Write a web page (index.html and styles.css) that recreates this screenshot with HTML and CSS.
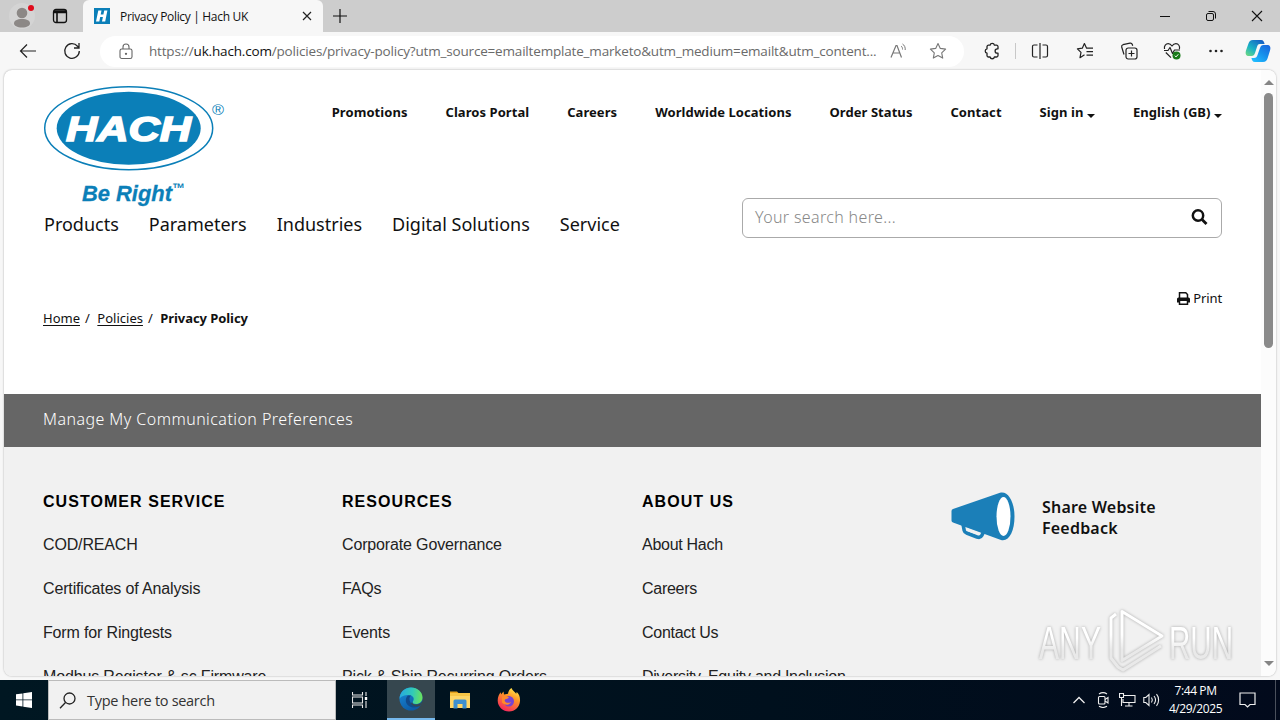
FILE: index.html
```html
<!DOCTYPE html>
<html lang="en">
<head>
    <meta charset="UTF-8">
    <meta name="viewport" content="width=device-width, initial-scale=1.0">
    <title>Privacy Policy | Hach UK</title>
    <link rel="stylesheet" href="styles.css">
</head>
<body>
    <div class="tabbar">
        <svg class="profile" width="28" height="28" viewBox="0 0 28 28">
            <circle cx="14" cy="14" r="13" fill="#d4d4d4"/>
            <circle cx="14" cy="11" r="5.300" fill="#8c8886"/>
            <path d="M6 21.500c0-3 3-4.500 8-4.500s8 1.500 8 4.500c0 2-3 4-8 4s-8-2-8-4z" fill="#8c8886"/>
            <circle cx="23" cy="6" r="3" fill="#e00b1c"/>
        </svg>
        <svg class="workspaces" width="16" height="16" viewBox="0 0 16 16" fill="none" stroke="#111" stroke-width="1.300">
            <rect x="1.500" y="1.500" width="13" height="13" rx="2.500"/>
            <path d="M2 3h12M2 4.500h12M5 4v10" stroke-width="1.600"/>
        </svg>
        <div class="tab">
            <svg width="16" height="16" viewBox="0 0 16 16">
                <rect width="16" height="16" fill="#0b7fb8"/>
                <path d="M4.300 2.500h3.200l-.8 4h2.700l.8-4h3.200l-2.200 11H8l.9-4.500H6.200l-.9 4.500H2z" fill="#fff"/>
            </svg>
            <span class="tab-title">Privacy Policy | Hach UK</span>
            <svg width="10" height="10" viewBox="0 0 10 10" stroke="#222" stroke-width="1.200"><path d="M1 1l8 8M9 1l-8 8"/></svg>
        </div>
        <svg class="new-tab" width="14" height="14" viewBox="0 0 14 14" stroke="#111" stroke-width="1.200"><path d="M7 0v14M0 7h14"/></svg>
        <div class="window-buttons">
            <svg width="12" height="12" viewBox="0 0 12 12" stroke="#111"><path d="M1 6.500h10"/></svg>
            <svg width="12" height="12" viewBox="0 0 12 12" fill="none" stroke="#111"><rect x="1.500" y="3.500" width="7" height="7" rx="1.500"/><path d="M3.500 1.500H8a2.500 2.500 0 0 1 2.500 2.500v4.500"/></svg>
            <svg width="12" height="12" viewBox="0 0 12 12" stroke="#111" stroke-width="1.100"><path d="M1 1l10 10M11 1L1 11"/></svg>
        </div>
    </div>

    <div class="toolbar">
        <svg class="back" width="18" height="16" viewBox="0 0 18 16" fill="none" stroke="#222" stroke-width="1.200"><path d="M17 8H1.500M8 1.500L1.500 8 8 14.500"/></svg>
        <svg class="reload" width="18" height="18" viewBox="0 0 18 18" fill="none" stroke="#222" stroke-width="1.300"><path d="M16.300 9A7.300 7.300 0 1 1 14.500 4.200L16 6M16 1v5h-5"/></svg>
        <div class="address">
            <svg class="lock" width="14" height="17" viewBox="0 0 14 17" fill="none" stroke="#666" stroke-width="1.100"><rect x="1" y="6" width="12" height="9.500" rx="1.800"/><path d="M4 6V4a3 3 0 0 1 6 0v2"/><circle cx="7" cy="10.800" r=".6" fill="#666"/></svg>
            <span class="url">https://<b>uk.hach.com</b>/policies/privacy-policy?utm_source=emailtemplate_marketo&amp;utm_medium=emailt&amp;utm_content...</span>
            <svg class="read" width="17" height="16" viewBox="0 0 17 16" fill="none" stroke="#777" stroke-width="1.200"><path d="M1 14.500L6 2.500h1l4.500 12M3 10h7"/><path d="M11 3c1.200.8 1.600 2 1.500 3.500M12.500 1c2 1.200 3 3.500 2.700 6" stroke-width="1"/></svg>
            <svg width="18" height="18" viewBox="0 0 18 18" fill="none" stroke="#777" stroke-width="1.100" stroke-linejoin="round"><path d="M9 1.500l2.300 4.900 5.300.7-3.900 3.700 1 5.300L9 13.500l-4.700 2.600 1-5.300L1.400 7.100l5.300-.7z"/></svg>
        </div>
        <svg class="t-ext" width="18" height="18" viewBox="0 0 18 18" fill="none" stroke="#222" stroke-width="1.300" stroke-linejoin="round"><path d="M5.500 3.200h1.600a2.200 2.200 0 0 1 4.300 0h2.100A1.500 1.500 0 0 1 15 4.700v2.100h-.7a2.200 2.200 0 0 0 0 4.400h.7v2.300a1.500 1.500 0 0 1-1.500 1.500h-2.100a2.200 2.200 0 0 1-4.300 0H5.500A1.500 1.500 0 0 1 4 13.500v-2.300a2.250 2.250 0 0 1 0-4.400V4.700a1.500 1.500 0 0 1 1.500-1.500z"/></svg>
        <span class="divider"></span>
        <svg class="t-split" width="18" height="18" viewBox="0 0 18 18" fill="none" stroke="#222" stroke-width="1.200"><path d="M6.500 3H3a1.500 1.500 0 0 0-1.500 1.500v9A1.500 1.500 0 0 0 3 15h3.500M11.500 3H15a1.500 1.500 0 0 1 1.500 1.500v9A1.500 1.500 0 0 1 15 15h-3.500M9 1v16"/></svg>
        <svg class="t-fav" width="18" height="18" viewBox="0 0 18 18" fill="none" stroke="#222" stroke-width="1.200" stroke-linejoin="round"><path d="M8.500 12.800L4 15.700l1-5.300L1.400 6.800l4.900-.6 2.100-4.700 2.200 4.700h6.400M10.500 9.700H17M10.500 13.200H17"/></svg>
        <svg class="t-coll" width="18" height="18" viewBox="0 0 18 18" fill="none" stroke="#222" stroke-width="1.200"><rect x="6" y="6" width="11" height="11" rx="2.200"/><path d="M11.500 8.500v6M8.500 11.500h6M4 12.500L1.700 5A2 2 0 0 1 3 2.700l7-1.500a2 2 0 0 1 2.300 1.300l.4 1.300"/></svg>
        <svg class="t-perf" width="18" height="18" viewBox="0 0 18 18" fill="none" stroke="#222" stroke-width="1.200" stroke-linejoin="round"><path d="M1.500 7C.8 3.500 3 1.700 5.200 1.700 7.300 1.700 8.300 3 9 4c.7-1 1.800-2.300 3.900-2.300 2.500 0 4.300 2.300 3.500 5.300M2.800 10.500L8 15.700M1 8.500h4L7 5.500l2.500 6L11.500 8H17"/><circle cx="13.500" cy="13.500" r="4" fill="#177a17" stroke="none"/><path d="M11.800 13.700l1.200 1.200 2.300-2.600" stroke="#fff" stroke-width="1"/></svg>
        <svg class="t-more" width="16" height="4" viewBox="0 0 16 4" fill="#222"><circle cx="2.500" cy="2" r="1.300"/><circle cx="8" cy="2" r="1.300"/><circle cx="13.500" cy="2" r="1.300"/></svg>
        <svg class="copilot" width="26" height="24" viewBox="0 0 26 24">
            <defs>
                <linearGradient id="cp1" x1="0" y1="1" x2=".8" y2="0"><stop offset="0" stop-color="#75dc7c"/><stop offset=".45" stop-color="#19b2c5"/><stop offset="1" stop-color="#155fc5"/></linearGradient>
                <linearGradient id="cp2" x1="1" y1="0" x2=".2" y2="1"><stop offset="0" stop-color="#1b62dc"/><stop offset=".5" stop-color="#168eea"/><stop offset="1" stop-color="#20bcff"/></linearGradient>
            </defs>
            <path d="M8 1h8c2.500 0 3 2 3.600 4H15c-2 0-2.500 1-3.200 3.500L10 14c-.7 2-1.500 3-3.500 3H4c-3 0-4-2-3-5.500L3.300 5C4.200 2.300 5.300 1 8 1z" fill="url(#cp1)"/>
            <path d="M18 23h-8c-2.500 0-3-2-3.600-4H9c2 0 3-1 3.700-3.500L15 9c.7-2 1.500-3 3.500-3H22c3 0 4 2 3 5.500L22.700 19c-.9 2.700-2 4-4.700 4z" fill="url(#cp2)"/>
        </svg>
    </div>

    <div class="viewport">
        <div class="page">
            <header>
                <svg class="logo" width="184" height="124" viewBox="0 0 184 124">
                    <ellipse cx="85.700" cy="43.200" rx="84" ry="41.500" fill="#fff" stroke="#0b7fb8" stroke-width="1.500"/>
                    <ellipse cx="85.700" cy="43.200" rx="72" ry="36.500" fill="#0b7fb8"/>
                    <text class="logo-name" x="23" y="55.500" textLength="125" lengthAdjust="spacingAndGlyphs">HACH</text>
                    <text class="logo-reg" x="169" y="30" textLength="12" lengthAdjust="spacingAndGlyphs">®</text>
                    <text class="logo-tag" x="39" y="116" textLength="90" lengthAdjust="spacingAndGlyphs">Be Right</text>
                    <text class="logo-tm" x="129" y="108" textLength="13" lengthAdjust="spacingAndGlyphs">™</text>
                </svg>
                <nav class="top-nav">
                    <a>Promotions</a>
                    <a>Claros Portal</a>
                    <a>Careers</a>
                    <a>Worldwide Locations</a>
                    <a>Order Status</a>
                    <a>Contact</a>
                    <a>Sign in <i class="caret"></i></a>
                    <a>English (GB) <i class="caret"></i></a>
                </nav>
            </header>
            <div class="menu-row">
                <nav class="main-nav">
                    <a>Products</a>
                    <a>Parameters</a>
                    <a>Industries</a>
                    <a>Digital Solutions</a>
                    <a>Service</a>
                </nav>
                <div class="search">
                    <span>Your search here...</span>
                    <svg width="17" height="17" viewBox="0 0 17 17" fill="none" stroke="#111"><circle cx="7" cy="6.500" r="5.200" stroke-width="2.500"/><path d="M11 10.500l4.500 4.500" stroke-width="2.800"/></svg>
                </div>
            </div>
            <div class="print">
                <svg width="13" height="13" viewBox="0 0 13 13"><path d="M2.500 6V.8h6.300l1.700 1.700V6M2.500 9v3.200h8V9" fill="#fff" stroke="#111" stroke-width="1.500"/><path d="M0 7a1.500 1.500 0 0 1 1.500-1.500h10A1.500 1.500 0 0 1 13 7v3.500h-2V9H2v1.500H0z" fill="#111"/></svg>
                <span>Print</span>
            </div>
            <div class="breadcrumb">
                <a>Home</a><span>/</span><a>Policies</a><span>/</span><b>Privacy Policy</b>
            </div>
            <div class="preferences">Manage My Communication Preferences</div>
            <footer>
                <ul>
                    <li class="heading">CUSTOMER SERVICE</li>
                    <li>COD/REACH</li>
                    <li>Certificates of Analysis</li>
                    <li>Form for Ringtests</li>
                    <li>Modbus Register &amp; sc Firmware</li>
                </ul>
                <ul>
                    <li class="heading">RESOURCES</li>
                    <li>Corporate Governance</li>
                    <li>FAQs</li>
                    <li>Events</li>
                    <li>Pick &amp; Ship Recurring Orders</li>
                </ul>
                <ul class="about">
                    <li class="heading">ABOUT US</li>
                    <li>About Hach</li>
                    <li>Careers</li>
                    <li>Contact Us</li>
                    <li>Diversity, Equity and Inclusion</li>
                </ul>
                <div class="feedback">
                    <svg width="64" height="50" viewBox="0 0 64 50">
                        <path d="M12 32l1.200 6.500c.3 1.500 1 2 2.500 2.500l10.300 4c2.500.8 3.800.5 4.800-1.500l2.200-4.500" fill="#f1f1f1" stroke="#1b7fb8" stroke-width="3.600" stroke-linejoin="round"/>
                        <path d="M2 17L49 .7C57-1.500 63.500 9.500 63.500 24.500S58 50 50 48L2 30.500Q.5 30 .5 28.500V19Q.5 17.500 2 17z" fill="#1b7fb8"/>
                        <path d="M15.500 36l13 4.800-1.300 2.300-10.700-3.800z" fill="#f1f1f1"/>
                        <ellipse cx="52.500" cy="24.500" rx="7" ry="19.500" fill="#fff"/>
                    </svg>
                    <span>Share Website<br>Feedback</span>
                </div>
            </footer>
        </div>
        <div class="scrollbar">
            <i class="arrow-up"></i>
            <div class="thumb"></div>
            <i class="arrow-down"></i>
        </div>
    </div>

    <svg class="watermark" width="204" height="72" viewBox="0 0 204 72">
        <defs>
            <linearGradient id="wm" x1="0" y1="0" x2="0" y2="1"><stop offset=".4" stop-color="#fff"/><stop offset=".65" stop-color="#e9e9e9"/></linearGradient>
        </defs>
        <text x="4" y="53" textLength="62" lengthAdjust="spacingAndGlyphs" fill="url(#wm)">ANY</text>
        <text x="134" y="53" textLength="64" lengthAdjust="spacingAndGlyphs" fill="url(#wm)">RUN</text>
        <g fill="none" stroke="url(#wm)" stroke-width="3" stroke-linejoin="round">
            <path d="M87 5.500l40 24.500-40 24.500zM81 8l-5 4v40l7 9 5 3 38-24"/>
        </g>
    </svg>

    <div class="taskbar">
        <div class="start">
            <svg width="16" height="16" viewBox="0 0 16 16" fill="#fff"><path d="M0 2.300l6.500-.9v6.100H0zM7.300 1.300L16 0v7.500H7.300zM0 8.300h6.500v6.200L0 13.600zM7.300 8.300H16V16l-8.700-1.300z"/></svg>
        </div>
        <div class="task-search">
            <svg width="17" height="17" viewBox="0 0 17 17" fill="none" stroke="#222" stroke-width="1.300"><circle cx="10.500" cy="6.500" r="5.500"/><path d="M6.500 10.500L1 16.200"/></svg>
            <span>Type here to search</span>
        </div>
        <div class="task-item task-view">
            <svg width="16" height="16" viewBox="0 0 16 16" fill="none" stroke="#e8e8e8" stroke-width="1.100"><path d="M.5 0v3h10V0M.5 16v-3h10v3M.5 5h10v6H.5zM14 0v4M14 9v7"/><path d="M12.800 5h2.400v3h-2.400z" fill="#fff" stroke="none"/></svg>
        </div>
        <div class="task-item active">
            <svg width="24" height="24" viewBox="0 0 24 24">
                <defs>
                    <linearGradient id="eg1" x1="0" y1=".4" x2="1" y2=".5"><stop offset="0" stop-color="#27a9e0"/><stop offset=".55" stop-color="#31cab8"/><stop offset="1" stop-color="#6be35b"/></linearGradient>
                    <linearGradient id="eg2" x1="0" y1="0" x2=".6" y2="1"><stop offset="0" stop-color="#1a8ddb"/><stop offset="1" stop-color="#0c59a4"/></linearGradient>
                </defs>
                <circle cx="12" cy="12" r="11.500" fill="url(#eg2)"/>
                <path d="M.7 10C2 4 6.500.5 12 .5c6.500 0 11.500 4.500 11.500 10 0 4-3 6.500-6.500 6.500-3 0-4-1.300-3-2.700 1.800-2.300.3-6.300-4-6.300C5.500 8 1.800 9 .7 12z" fill="url(#eg1)"/>
                <path d="M9 8.500c-3.500 3-3 9.500 3 11.500 4 1.300 7.500 0 9.500-2-3 1-8 1-10-2.500C10 13 10 10 12 8.500z" fill="#114a8b"/>
                <path d="M13.500 14.500c-1 1.500.5 3 3.500 3 3 0 5-1 6.500-3.500-.5 2-1.200 3.500-2.500 5-3 1-7.500.5-9-2.500z" fill="#36474f"/>
            </svg>
        </div>
        <div class="task-item">
            <svg width="22" height="20" viewBox="0 0 22 20"><path d="M1 1.500h7l2 2H1z" fill="#e6a11c"/><path d="M1 3h20v15H1z" fill="#ffd667"/><path d="M1 3h20v3H1z" fill="#f9c646"/><path d="M4.500 18.500V11q0-1.500 1.500-1.500h10q1.500 0 1.500 1.500v7.500h-4v-4.500h-5v4.500z" fill="#3c8fd0"/></svg>
        </div>
        <div class="task-item">
            <svg width="24" height="24" viewBox="0 0 24 24">
                <defs><linearGradient id="ff" x1=".8" y1="0" x2=".3" y2="1"><stop offset="0" stop-color="#fff04f"/><stop offset=".4" stop-color="#ff9426"/><stop offset="1" stop-color="#f5235f"/></linearGradient></defs>
                <path d="M14.500 0c1 2.500 3 3.500 4.700 5.700l.5-1.700C22 6 23.300 9 23 13c-.4 6-5 10.500-11 10.500S.8 19 .7 12.800C.6 9 2 6 3.800 4.200L4 6.500l2.500-3 .5 3 4-.8C11.500 3 12.500 1.300 14.500 0z" fill="url(#ff)"/>
                <circle cx="11.800" cy="13.200" r="5.200" fill="#7743d2"/>
                <path d="M5 8.500c3-1.500 5 0 7 1-1.500 1.700-4 1-4.300 3 .3 2.500 4 3 6.300 1.500-1 3-6 4-9 .5z" fill="#ff8a2a"/>
            </svg>
        </div>
        <div class="tray">
            <svg width="12" height="8" viewBox="0 0 12 8" fill="none" stroke="#eee" stroke-width="1.300"><path d="M.5 7L6 1.500 11.500 7"/></svg>
            <svg class="tray-meet" width="13" height="16" viewBox="0 0 13 16" fill="none" stroke="#eee" stroke-width="1.100"><rect x="1.500" y="4.500" width="6.500" height="7.500" rx="1"/><path d="M8 7.500l3-2v5.500l-3-2M2 2c2.500-1.700 5.500-1.700 8 0M2 14.300c2.500 1.500 5.500 1.500 8 0"/></svg>
            <svg class="tray-net" width="17" height="14" viewBox="0 0 17 14" fill="none" stroke="#eee" stroke-width="1.100"><path d="M5 2.500h11v7H4V6M.5.500h4v4h-4zM2.500 4.500v8.500M10 9.500V13M6 13h7.500"/></svg>
            <svg class="tray-vol" width="17" height="14" viewBox="0 0 17 14" fill="none" stroke="#eee" stroke-width="1.100"><path d="M.8 4.500h2L6 1.500v11L2.800 9.500h-2zM8.500 4.500c1 1.500 1 3.500 0 5M11 3c1.800 2.300 1.800 5.700 0 8M13.500 1.200c2.800 3.300 2.800 8.300 0 11.600"/></svg>
            <div class="clock"><span>7:44 PM</span><span>4/29/2025</span></div>
            <svg class="tray-note" width="17" height="16" viewBox="0 0 17 16" fill="none" stroke="#eee" stroke-width="1.200"><path d="M1 1h15v11.500h-5L8.500 15 6 12.500H1z"/></svg>
            <span class="show-desktop"></span>
        </div>
    </div>
</body>
</html>
```
FILE: styles.css
```css
* {
    box-sizing: border-box;
}
body {
    margin: 0;
    width: 1280px;
    height: 720px;
    overflow: hidden;
    display: flex;
    flex-direction: column;
    background: #f7f7f7;
    font-family: "Noto Sans", sans-serif;
    color: #111;
}
svg {
    display: block;
    flex: none;
}
a, span {
    white-space: nowrap;
}

/* browser tabs */
.tabbar {
    height: 32px;
    flex: none;
    display: flex;
    align-items: center;
    background: #cdcdcd;
}
.profile {
    margin-left: 8px;
}
.workspaces {
    margin-left: 16px;
}
.tab {
    width: 240px;
    height: 32px;
    margin-left: 15px;
    padding: 0 11px;
    display: flex;
    align-items: center;
    background: #f7f7f7;
    border-radius: 6px 6px 0 0;
}
.tab-title {
    flex: 1;
    margin-left: 10px;
    font-family: "Open Sans", sans-serif;
    font-size: 12px;
    letter-spacing: -0.32px;
}
.new-tab {
    margin-left: 10px;
}
.window-buttons {
    display: flex;
    gap: 34px;
    margin-left: auto;
    padding-right: 17px;
}

/* address bar */
.toolbar {
    height: 38px;
    flex: none;
    display: flex;
    align-items: center;
    padding-left: 19px;
}
.reload {
    margin-left: 26px;
}
.address {
    width: 864px;
    height: 31px;
    margin-left: 19px;
    padding: 0 17px 0 19px;
    display: flex;
    align-items: center;
    background: #fff;
    border-radius: 16px;
}
.url {
    width: 741px;
    flex: none;
    margin-left: 16px;
    font-family: "Open Sans", sans-serif;
    font-size: 13.5px;
    letter-spacing: -0.18px;
    color: #6a6a6a;
}
.url b {
    font-weight: normal;
    color: #111;
}
.read {
    margin-right: 22px;
}
.t-ext {
    margin-left: 19px;
}
.divider {
    width: 1px;
    height: 16px;
    margin: 0 15px 0 14px;
    background: #c8c8c8;
}
.t-fav {
    margin-left: 27px;
}
.t-coll {
    margin-left: 26px;
}
.t-perf {
    margin-left: 25px;
}
.t-more {
    margin-left: 27px;
}
.copilot {
    margin-left: 21px;
}

/* page area */
.viewport {
    width: 1272px;
    height: 606px;
    margin: 0 4px 4px;
    flex: none;
    display: flex;
    overflow: hidden;
    background: #fff;
    border-radius: 8px;
    box-shadow: 0 0 2px rgba(0, 0, 0, 0.35);
}
.page {
    width: 1257px;
    height: 606px;
    overflow: hidden;
}
header {
    height: 127px;
    padding: 15px 39px 0;
    display: flex;
    justify-content: space-between;
}
.logo-name {
    font: italic bold 35px "Liberation Sans", sans-serif;
    fill: #fff;
    stroke: #fff;
    stroke-width: 1.6px;
}
.logo-reg {
    font: 14px "Liberation Sans", sans-serif;
    fill: #0b7fb8;
}
.logo-tag {
    font: italic bold 22px "Liberation Sans", sans-serif;
    fill: #0b7fb8;
    stroke: #0b7fb8;
    stroke-width: 0.3px;
}
.logo-tm {
    font: bold 14px "Liberation Sans", sans-serif;
    fill: #0b7fb8;
}
.top-nav {
    display: flex;
    gap: 38px;
    padding-top: 18px;
    font-size: 13px;
    line-height: 18px;
    font-weight: bold;
    letter-spacing: 0.06px;
}
.caret {
    display: inline-block;
    border: 4px solid transparent;
    border-top-color: #111;
    border-bottom: 0;
    vertical-align: -1px;
}
.menu-row {
    height: 42px;
    padding: 0 39px 0 40px;
    display: flex;
    justify-content: space-between;
}
.main-nav {
    display: flex;
    gap: 30px;
    padding-top: 14px;
    font-size: 18px;
    line-height: 26px;
}
.search {
    width: 480px;
    height: 40px;
    margin-top: 1px;
    padding: 0 13px 2px 12px;
    display: flex;
    align-items: center;
    justify-content: space-between;
    border: 1px solid #aaa;
    border-radius: 6px;
    font-size: 16px;
    font-weight: 300;
    letter-spacing: 0.35px;
    color: #888;
}
.print {
    height: 20px;
    margin: 49px 39px 0;
    display: flex;
    justify-content: flex-end;
    align-items: center;
    gap: 3px;
    font-size: 13px;
    letter-spacing: -0.1px;
}
.breadcrumb {
    height: 20px;
    padding-left: 39px;
    display: flex;
    align-items: center;
    font-size: 13px;
}
.breadcrumb a {
    text-decoration: underline;
    text-underline-offset: 2px;
}
.breadcrumb span {
    margin: 0 8px 0 5px;
}
.breadcrumb a + span {
    margin-right: 7.5px;
}
.breadcrumb b {
    letter-spacing: -0.07px;
}
.preferences {
    height: 53px;
    margin-top: 66px;
    padding-left: 39px;
    background: #666;
    color: #fff;
    font-size: 16px;
    font-weight: 300;
    line-height: 51px;
    letter-spacing: 0.45px;
}
footer {
    height: 240px;
    padding: 32px 39px 0;
    display: grid;
    grid-template-columns: 299px 300px 309px 1fr;
    background: #f1f1f1;
}
footer ul {
    list-style: none;
    margin: 0;
    padding: 0;
    font-family: "Liberation Sans", sans-serif;
    font-size: 16px;
    line-height: 44px;
    letter-spacing: -0.15px;
    color: #222;
    white-space: nowrap;
}
footer .about {
    letter-spacing: -0.28px;
}
footer .heading {
    height: 44px;
    padding-top: 1px;
    font-weight: bold;
    letter-spacing: 1.05px;
    color: #000;
}
.feedback {
    display: flex;
    align-items: flex-start;
    gap: 27px;
    padding-top: 13px;
}
.feedback span {
    padding-top: 5px;
    font-size: 16px;
    line-height: 21px;
    font-weight: 600;
    letter-spacing: 0.2px;
}
.scrollbar {
    width: 15px;
    display: flex;
    flex-direction: column;
    align-items: center;
    background: #fcfcfc;
}
.arrow-up, .arrow-down {
    border: 5px solid transparent;
}
.arrow-up {
    margin-top: 10px;
    border-top: 0;
    border-bottom-color: #858585;
}
.arrow-down {
    margin: auto 0 10px;
    border-bottom: 0;
    border-top-color: #858585;
}
.thumb {
    width: 9px;
    height: 255px;
    margin-top: 8px;
    background: #8a8a8a;
    border-radius: 5px;
}

.watermark {
    position: absolute;
    left: 1035px;
    top: 606px;
    font: 46px "Liberation Sans", sans-serif;
    filter: drop-shadow(0 0 1.5px rgba(0, 0, 0, 0.3));
}

/* taskbar */
.taskbar {
    height: 40px;
    flex: none;
    display: flex;
    background: linear-gradient(90deg, #001722, #00101d 60%, #020a1c);
    color: #fff;
}
.start {
    width: 48px;
    display: flex;
    align-items: center;
    padding-left: 16px;
}
.task-search {
    width: 288px;
    padding-left: 10px;
    display: flex;
    align-items: center;
    gap: 11px;
    background: #f1f1f1;
    border: 1px solid #bbb;
    color: #333;
    font-family: "Open Sans", sans-serif;
    font-size: 14.5px;
    letter-spacing: -0.3px;
}
.task-item {
    width: 49px;
    display: flex;
    align-items: center;
    justify-content: center;
}
.task-view {
    width: 51px;
    padding-right: 4px;
}
.active {
    width: 48px;
    background: #36474f;
    border-bottom: 2px solid #76b9ed;
}
.tray {
    display: flex;
    align-items: center;
    margin-left: auto;
}
.tray-meet {
    margin-left: 12px;
}
.tray-net {
    margin-left: 9px;
}
.tray-vol {
    margin-left: 7px;
}
.clock {
    width: 53px;
    margin-left: 9px;
    display: flex;
    flex-direction: column;
    align-items: center;
    font-family: "Open Sans", sans-serif;
    font-size: 12px;
    line-height: 18px;
    letter-spacing: -0.4px;
}
.tray-note {
    margin-left: 17px;
}
.show-desktop {
    width: 5px;
    height: 40px;
    margin-left: 19px;
    border-left: 1px solid #4a505c;
}
```
